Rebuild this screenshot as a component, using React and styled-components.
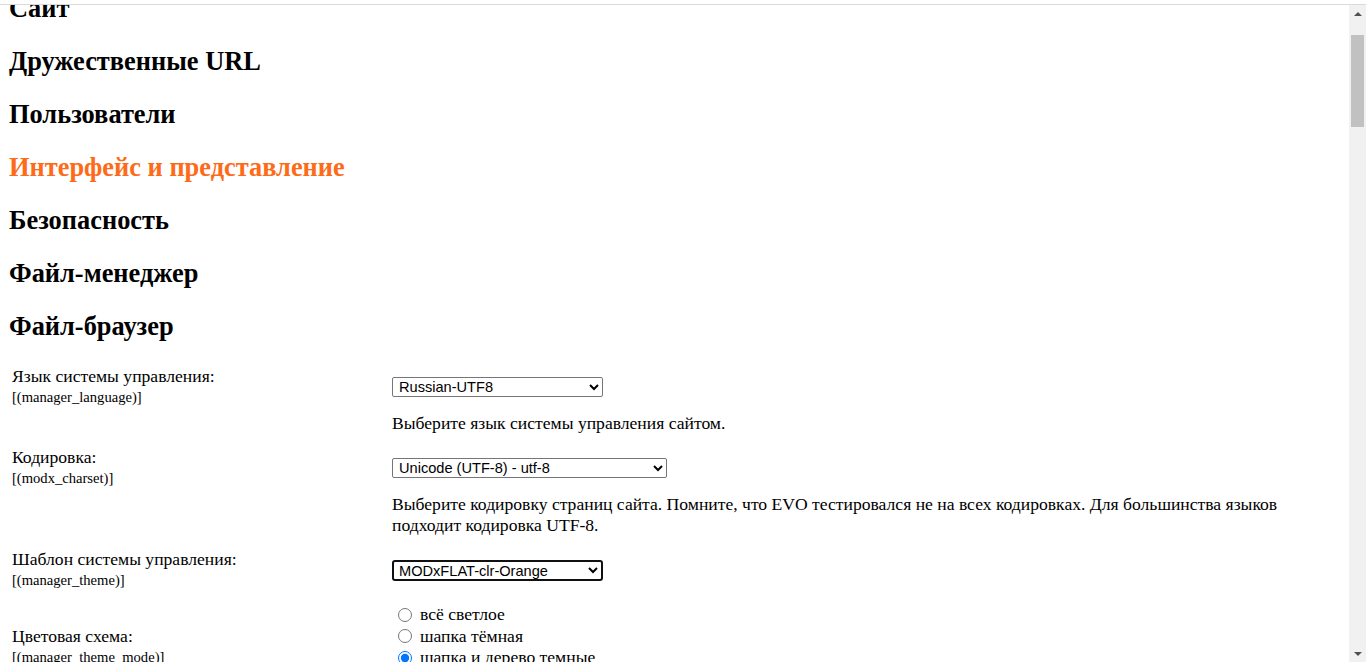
import React, { useLayoutEffect, useRef } from 'react'
import styled, { createGlobalStyle, css } from 'styled-components'

const GlobalStyle = createGlobalStyle`
	html, body {
		margin: 0;
		height: 100%;
		background: #fff;
	}
	body {
		font-family: 'Liberation Serif', 'Times New Roman', serif;
		color: #000;
		overflow: hidden;
	}
`

const Frame = styled.div`
	height: 100vh;
	box-sizing: border-box;
	padding-top: 4px;
	display: flex;
	flex-direction: column;
`

const Viewport = styled.div`
	flex: 1;
	min-height: 0;
	display: flex;
	border-top: 1px solid #dadada;
`

const Content = styled.div`
	flex: 1;
	min-width: 0;
	position: relative;
	overflow: hidden;
`

const ScrollBar = styled.div`
	width: 17px;
	flex-shrink: 0;
	background: #f1f1f1;
	display: flex;
	flex-direction: column;
`

const ScrollArrow = styled.div`
	height: 17px;
	display: flex;
	align-items: center;
	justify-content: center;
	svg {
		width: 8px;
		height: 4px;
		fill: #505050;
	}
`

const ScrollTrack = styled.div`
	flex: 1;
	padding: 13px 2px 0;
`

const ScrollThumb = styled.div`
	height: 92px;
	background: #c1c1c1;
`

const Page = styled.div`
	box-sizing: border-box;
	min-height: 4449px;
	padding: 8px 8px 8px 9px;
	display: flex;
	flex-direction: column;
`

const PageTitle = styled.h1`
	margin: 0 0 15px;
	font-size: 30px;
	line-height: 36px;
`

const SectionTitle = styled.h2`
	margin: 20px 0 0;
	font-size: 26.4px;
	line-height: 33px;
	font-weight: bold;
	color: ${(p) => (p.$active ? '#fd6b19' : '#000')};
`

const Settings = styled.div`
	margin: 23px 0 0 -1px;
	padding: 0 12px 0 4px;
	display: flex;
	flex-direction: column;
	gap: 13px;
`

const Setting = styled.div`
	display: grid;
	grid-template-columns: 380px 1fr;
	align-items: center;
	row-gap: 5px;
`

const Label = styled.div`
	font-size: 17.6px;
	line-height: 21px;
	small {
		display: block;
		font-size: 14.6px;
	}
`

const Description = styled.div`
	grid-column: 2;
	font-size: 17.6px;
	line-height: 21px;
`

const Select = styled.select`
	width: ${(p) => p.$w}px;
	height: 20px;
	box-sizing: border-box;
	padding: 0 0 0 2px;
	font-family: 'Liberation Sans', Arial, sans-serif;
	font-size: 14.6px;
	color: #000;
	background: #fff;
	border: 1px solid #767676;
	border-radius: 2px;
	${(p) =>
		p.$focused &&
		css`
			height: 21px;
			border: 2px solid #101010;
			border-radius: 3px;
			padding-left: 1px;
		`}
`

const Input = styled.input`
	width: ${(p) => p.$w || 60}px;
	height: 20px;
	box-sizing: border-box;
	font-family: 'Liberation Sans', Arial, sans-serif;
	font-size: 14.6px;
	border: 1px solid #767676;
	border-radius: 2px;
`

const RadioGroup = styled.div`
	display: flex;
	flex-direction: column;
`

const RadioOption = styled.label`
	display: flex;
	align-items: center;
	height: 21.5px;
	font-size: 17.6px;
	input {
		width: 14px;
		height: 14px;
		margin: 0 8px 0 6px;
	}
`

const sections = [
	'Сайт',
	'Дружественные URL',
	'Пользователи',
	'Интерфейс и представление',
	'Безопасность',
	'Файл-менеджер',
	'Файл-браузер',
]

const Radios = ({ name, options, checked }) => (
	<RadioGroup>
		{options.map((o, i) => (
			<RadioOption key={o}>
				<input type='radio' name={name} defaultChecked={i === checked} />
				{o}
			</RadioOption>
		))}
	</RadioGroup>
)

const App = () => {
	const contentRef = useRef(null)
	const anchorRef = useRef(null)

	useLayoutEffect(() => {
		const c = contentRef.current
		const a = anchorRef.current
		if (c && a) c.scrollTop = Math.round(a.offsetTop - 40)
	}, [])

	return (
		<Frame>
			<GlobalStyle />
			<Viewport>
				<Content ref={contentRef}>
					<Page>
						<PageTitle>Конфигурация</PageTitle>
						{sections.map((t, i) => (
							<SectionTitle key={t} ref={i === 1 ? anchorRef : null} $active={i === 3}>
								{t}
							</SectionTitle>
						))}
						<Settings>
							<Setting>
								<Label>
									Язык системы управления:
									<small>[(manager_language)]</small>
								</Label>
								<div>
									<Select $w={211} defaultValue='ru'>
										<option value='ru'>Russian-UTF8</option>
										<option value='en'>English</option>
									</Select>
								</div>
								<Description>Выберите язык системы управления сайтом.</Description>
							</Setting>
							<Setting>
								<Label>
									Кодировка:
									<small>[(modx_charset)]</small>
								</Label>
								<div>
									<Select $w={275} defaultValue='utf'>
										<option value='utf'>Unicode (UTF-8) - utf-8</option>
										<option value='win'>Cyrillic (Windows) - windows-1251</option>
									</Select>
								</div>
								<Description>
									Выберите кодировку страниц сайта. Помните, что EVO тестировался не на всех кодировках. Для большинства языков подходит кодировка UTF-8.
								</Description>
							</Setting>
							<Setting>
								<Label>
									Шаблон системы управления:
									<small>[(manager_theme)]</small>
								</Label>
								<div>
									<Select $w={211} $focused defaultValue='flat'>
										<option value='flat'>MODxFLAT-clr-Orange</option>
										<option value='default'>default</option>
									</Select>
								</div>
							</Setting>
							<Setting>
								<Label>
									Цветовая схема:
									<small>[(manager_theme_mode)]</small>
								</Label>
								<Radios
									name='mode'
									checked={2}
									options={['всё светлое', 'шапка тёмная', 'шапка и дерево темные', 'всё тёмное']}
								/>
							</Setting>
							<Setting>
								<Label>
									Показывать вкладку «Мета-теги»:
									<small>[(show_meta)]</small>
								</Label>
								<Radios name='meta' checked={1} options={['Да', 'Нет']} />
								<Description>Показывать вкладку мета-тегов и ключевых слов при редактировании ресурса.</Description>
							</Setting>
							<Setting>
								<Label>
									Количество строк в логе:
									<small>[(number_of_logs)]</small>
								</Label>
								<div>
									<Input defaultValue='100' />
								</div>
								<Description>Количество строк, показываемых на странице при просмотре журнала событий.</Description>
							</Setting>
							<Setting>
								<Label>
									Количество результатов:
									<small>[(number_of_results)]</small>
								</Label>
								<div>
									<Input defaultValue='30' />
								</div>
								<Description>Количество результатов, показываемых в списках и таблицах.</Description>
							</Setting>
						</Settings>
					</Page>
				</Content>
				<ScrollBar>
					<ScrollArrow>
						<svg viewBox='0 0 8 4'>
							<polygon points='0,4 4,0 8,4' />
						</svg>
					</ScrollArrow>
					<ScrollTrack>
						<ScrollThumb />
					</ScrollTrack>
					<ScrollArrow>
						<svg viewBox='0 0 8 4'>
							<polygon points='0,0 8,0 4,4' />
						</svg>
					</ScrollArrow>
				</ScrollBar>
			</Viewport>
		</Frame>
	)
}

export default App
